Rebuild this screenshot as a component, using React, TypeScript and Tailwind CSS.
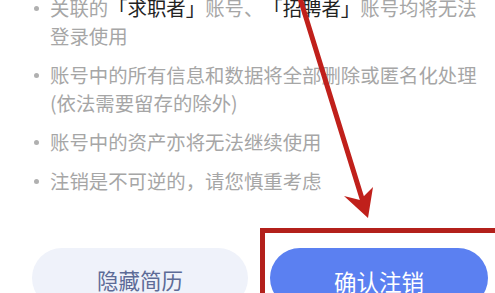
import React from "react";

const items: React.ReactNode[] = [
  <>
    关联的<span className="text-[#222222]">「求职者」</span>账号、<span className="text-[#222222]">「招聘者」</span>账号均将无法
    <br />
    登录使用
  </>,
  <>
    账号中的所有信息和数据将全部删除或匿名化处理
    <br />
    (依法需要留存的除外)
  </>,
  <>账号中的资产亦将无法继续使用</>,
  <>注销是不可逆的，请您慎重考虑</>,
];

export default function App() {
  return (
    <div
      className="relative w-[495px] h-[293px] overflow-hidden bg-white [text-spacing-trim:space-all]"
      style={{ fontFamily: '"Noto Sans CJK SC", "Noto Sans", sans-serif' }}
    >
      <ul className="mt-[-6px] flex flex-col gap-[11px] pl-[34px]">
        {items.map((it, i) => (
          <li key={i} className="flex items-start">
            <span className="mt-[11.5px] mr-[11px] h-[5px] w-[5px] shrink-0 rounded-full bg-[#b0b0b0]" />
            <span className="whitespace-nowrap text-[19.4px] leading-[28px] text-[#a6a6a6] [text-spacing-trim:space-all]">{it}</span>
          </li>
        ))}
      </ul>

      <div className="mt-[53px] flex gap-[22px] pl-[32px]">
        <div className="flex h-[60px] w-[216px] shrink-0 items-start justify-center rounded-full bg-[#eff2fa] pt-[17px] text-[21.5px] leading-[30px] text-[#5d6b97]">
          隐藏简历
        </div>
        <div className="relative flex h-[60px] w-[218px] shrink-0 items-start justify-center rounded-full bg-[#5b80f1] pt-[18px] text-[22.5px] leading-[30px] text-white">
          确认注销
          <span className="absolute left-[163px] top-[39px] text-[14px] leading-[14px] text-[#d0d8f5]">··</span>
        </div>
      </div>

      {/* red annotation box */}
      <div className="pointer-events-none absolute left-[260px] top-[228px] h-[80px] w-[240px] border-[5px] border-[#b3201b]" />

      {/* red arrow */}
      <svg className="pointer-events-none absolute left-0 top-0" width="495" height="293" viewBox="0 0 495 293">
        <line x1="299" y1="-5" x2="364" y2="205" stroke="#c0201b" strokeWidth="5" strokeLinecap="round" />
        <polygon points="368,218 344,196 360,200 373,187" fill="#c0201b" />
      </svg>
    </div>
  );
}
